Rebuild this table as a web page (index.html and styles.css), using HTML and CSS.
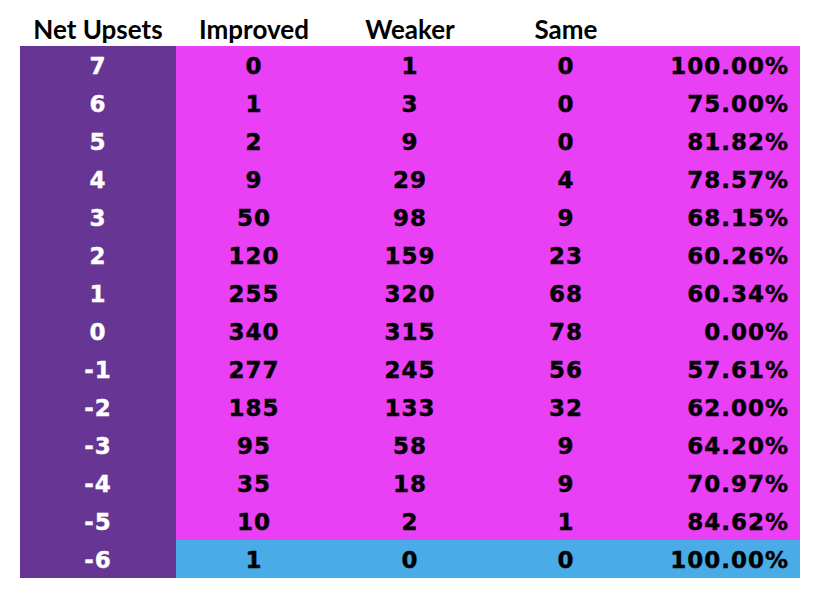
FILE: index.html
```html
<!DOCTYPE html>
<html>
<head>
<meta charset="utf-8">
<link rel="stylesheet" href="styles.css">
</head>
<body>
<div class="sheet">
  <div class="grid">
    <div class="hd">Net Upsets</div><div class="hd">Improved</div><div class="hd">Weaker</div><div class="hd">Same</div><div class="hd"></div>

    <div class="key">7</div><div class="c">0</div><div class="c">1</div><div class="c">0</div><div class="c pct">100.00%</div>
    <div class="key">6</div><div class="c">1</div><div class="c">3</div><div class="c">0</div><div class="c pct">75.00%</div>
    <div class="key">5</div><div class="c">2</div><div class="c">9</div><div class="c">0</div><div class="c pct">81.82%</div>
    <div class="key">4</div><div class="c">9</div><div class="c">29</div><div class="c">4</div><div class="c pct">78.57%</div>
    <div class="key">3</div><div class="c">50</div><div class="c">98</div><div class="c">9</div><div class="c pct">68.15%</div>
    <div class="key">2</div><div class="c">120</div><div class="c">159</div><div class="c">23</div><div class="c pct">60.26%</div>
    <div class="key">1</div><div class="c">255</div><div class="c">320</div><div class="c">68</div><div class="c pct">60.34%</div>
    <div class="key">0</div><div class="c">340</div><div class="c">315</div><div class="c">78</div><div class="c pct">0.00%</div>
    <div class="key">-1</div><div class="c">277</div><div class="c">245</div><div class="c">56</div><div class="c pct">57.61%</div>
    <div class="key">-2</div><div class="c">185</div><div class="c">133</div><div class="c">32</div><div class="c pct">62.00%</div>
    <div class="key">-3</div><div class="c">95</div><div class="c">58</div><div class="c">9</div><div class="c pct">64.20%</div>
    <div class="key">-4</div><div class="c">35</div><div class="c">18</div><div class="c">9</div><div class="c pct">70.97%</div>
    <div class="key">-5</div><div class="c">10</div><div class="c">2</div><div class="c">1</div><div class="c pct">84.62%</div>
    <div class="key">-6</div><div class="c blue">1</div><div class="c blue">0</div><div class="c blue">0</div><div class="c pct blue">100.00%</div>
  </div>
</div>
</body>
</html>
```

FILE: styles.css
```css
html, body {
  margin: 0;
  padding: 0;
  background: #ffffff;
}

.sheet {
  padding: 10px 0 0 20px;
}

.grid {
  display: grid;
  grid-template-columns: repeat(5, 156px);
  grid-auto-rows: 38px;
  grid-template-rows: 36px;
}

.hd {
  font-family: Lato, "Open Sans", sans-serif;
  font-weight: 700;
  font-size: 26px;
  color: #000;
  text-align: center;
  line-height: 38px;
  height: 36px;
  overflow: visible;
}

.key, .c {
  font-family: "DejaVu Sans", Verdana, sans-serif;
  font-weight: 700;
  font-size: 23px;
  letter-spacing: 1px;
  line-height: 40px;
  height: 38px;
  text-align: center;
  -webkit-text-stroke: 0.4px currentColor;
}

.key {
  background: #673695;
  color: #ffffff;
}

.c {
  background: #e93ff5;
  color: #000000;
}

.c.blue {
  background: #4aace6;
}

.pct {
  text-align: right;
  padding-right: 11px;
}
```
